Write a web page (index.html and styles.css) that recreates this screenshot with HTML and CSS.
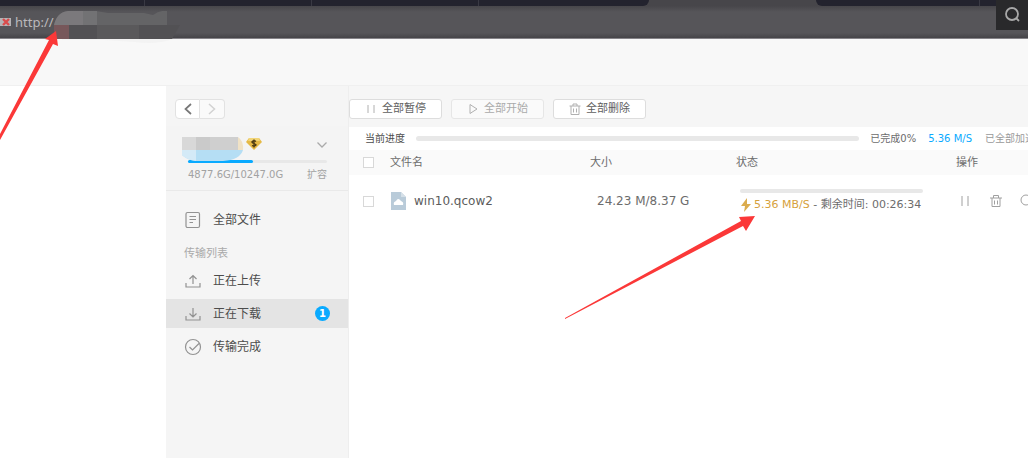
FILE: index.html
```html
<!DOCTYPE html>
<html lang="zh-CN">
<head>
<meta charset="utf-8">
<title>正在下载</title>
<link rel="stylesheet" href="styles.css">
</head>
<body>
<header class="browser">
  <div class="tabs">
    <div class="tab tab-first"></div><div class="tab"></div><div class="tab"></div><div class="tab tab-before"></div>
    <div class="tab-active"></div>
    <div class="tab tab-after"></div><div class="tab tab-last"></div>
  </div>
  <div class="address">
    <svg class="insecure" width="12" height="12" viewBox="0 0 12 12"><path d="M0 2h11v8H0z" fill="#b5b3b5"/><path d="M3 3l6 6M9 3l-6 6" stroke="#d94b4b" stroke-width="2.4"/></svg>
    <span>http://</span>
  </div>
  <svg class="mask" width="128" height="34" viewBox="0 0 128 34">
    <path d="M0 14Q3 1 14 0h28l12 2h36l9 2q7-5 14-4v14z" fill="#646466"/>
    <path d="M0 14Q3 1 14 0h15v14z" fill="#7b797c"/>
    <path d="M29 0h14v14H29z" fill="#727274"/>
    <path d="M0 14h126l-8 14H0z" fill="#525154"/>
    <path d="M0 14h15v14H0z" fill="#77575a"/>
    <path d="M43 14h42v14H43z" fill="#5a595b"/>
    <path d="M8 28h110q-14 6-38 3l-30-2H8z" fill="#f3f3f3"/>
  </svg>
  <button class="search" type="button" aria-label="搜索"><svg width="18" height="18" viewBox="0 0 18 18" fill="none" stroke="#a8a8a8" stroke-width="1.8"><circle cx="9" cy="8" r="6"/><path d="M13 12l3 3"/></svg></button>
</header>
<div class="banner"></div>
<div class="page">
  <div class="blank"></div>
  <aside class="side">
    <div class="history">
      <button type="button" aria-label="后退"><svg width="10" height="14" viewBox="0 0 10 14"><path d="M8 2L2.500 7L8 12" fill="none" stroke="#777" stroke-width="1.7"/></svg></button><button type="button" aria-label="前进" disabled><svg width="10" height="14" viewBox="0 0 10 14"><path d="M2 2l5.500 5L2 12" fill="none" stroke="#d2d2d2" stroke-width="1.5"/></svg></button>
    </div>
    <div class="account">
      <div class="user">
        <svg width="62" height="26" viewBox="0 0 62 26"><path d="M56 0q6 4 5 13h-5z" fill="#f0e2c6"/><path d="M0 0h56v14H0z" fill="#cfcfcf"/><path d="M0 0h14v14H0z" fill="#d8d8d8"/><path d="M14 0h14v14H14z" fill="#cacaca"/><path d="M0 13h61q-3 10-20 11H14Q5 23 0 18z" fill="#b5def4"/><path d="M0 13h14v11Q5 23 0 18z" fill="#d4eaf7"/></svg>
        <svg width="16" height="14" viewBox="0 0 16 14"><path d="M3 1h10l3 4-8 8L0 5z" fill="#e5b945"/><path d="M3 1h10l1 3H2z" fill="#f2d577"/><path d="M10 4.500Q8 3 6.500 4.200T8 6.500T9.500 8.500T6 8.500M8 2.500v8" fill="none" stroke="#493711" stroke-width="1.3"/></svg>
        <button class="more" type="button" aria-label="展开"><svg width="12" height="8" viewBox="0 0 12 8"><path d="M1.500 1.500L6 6l4.500-4.500" fill="none" stroke="#aaa" stroke-width="1.3"/></svg></button>
      </div>
      <div class="quota"><div style="width:47%"></div></div>
      <div class="space"><span>4877.6G/10247.0G</span><a href="#">扩容</a></div>
    </div>
    <nav class="menu">
      <a href="#"><svg width="18" height="18" viewBox="0 0 18 18"><rect x="2" y="1.500" width="13.500" height="15" rx="1.500"/><path d="M5.500 5.500H12M5.500 8.500H12M5.500 11.500H9"/></svg>全部文件</a>
      <h2>传输列表</h2>
      <a href="#"><svg width="18" height="18" viewBox="0 0 18 18"><path d="M2 11v4h14v-4M9 12V4M5.500 7L9 3.500L12.500 7"/></svg>正在上传</a>
      <a href="#" class="current"><svg width="18" height="18" viewBox="0 0 18 18"><path d="M2 11v4h14v-4M9 3v8.500M5.500 8.500L9 12l3.500-3.500"/></svg>正在下载<b>1</b></a>
      <a href="#"><svg width="18" height="18" viewBox="0 0 18 18"><circle cx="9" cy="9" r="7.500"/><path d="M5.500 9l3 3l6.500-6.500"/></svg>传输完成</a>
    </nav>
  </aside>
  <main class="main">
    <div class="toolbar">
      <button type="button"><svg width="12" height="12" viewBox="0 0 12 12"><path d="M3 2v8M9 2v8"/></svg>全部暂停</button>
      <button type="button" disabled><svg width="12" height="12" viewBox="0 0 12 12"><path d="M3 1.500v9L10 6z"/></svg>全部开始</button>
      <button type="button"><svg width="12" height="12" viewBox="0 0 12 12"><path d="M.5 3h11M4 3V1h4v2M2 3v8.500h8V3M4.500 5.500v4M7.500 5.500v4"/></svg>全部删除</button>
    </div>
    <div class="progress">
      <span class="label">当前进度</span>
      <div class="track"></div>
      <span class="done">已完成0%</span>
      <span class="speed">5.36 M/S</span>
      <span class="boost">已全部加速</span>
    </div>
    <table>
      <colgroup><col class="c-check"><col><col class="c-size"><col class="c-status"><col class="c-op"></colgroup>
      <thead><tr><th><input type="checkbox" aria-label="全选"></th><th>文件名</th><th>大小</th><th>状态</th><th>操作</th></tr></thead>
      <tbody><tr>
        <td><input type="checkbox" aria-label="选择 win10.qcow2"></td>
        <td><div class="file"><svg width="16" height="18" viewBox="0 0 16 18"><path d="M1 0h10l5 5v13H1z" fill="#b9cbd9"/><path d="M11 0l5 5h-5z" fill="#d5e0e8"/><path d="M4 13q-1-3 2-4q2-4 5 0q3 1 2 4z" fill="#fff"/></svg>win10.qcow2</div></td>
        <td class="size">24.23 M/8.37 G</td>
        <td class="status"><div class="bar"></div><div class="info"><svg width="12" height="14" viewBox="0 0 12 14"><path d="M7 0L1 8h4l-1 6l7-8H7z" fill="#dbac4e"/></svg><span><em>5.36 MB/S</em> - 剩余时间: 00:26:34</span></div></td>
        <td class="ops"><div>
          <button type="button" aria-label="暂停"><svg width="14" height="14" viewBox="0 0 14 14"><path d="M4 2v10M10 2v10"/></svg></button>
          <button type="button" aria-label="删除"><svg width="14" height="14" viewBox="0 0 14 14"><path d="M1 4h12M4.500 4V1.500h5V4M3 4v8.500h8V4M5.500 6.500v4M8.500 6.500v4"/></svg></button>
          <button type="button" aria-label="查看"><svg width="14" height="14" viewBox="0 0 14 14"><circle cx="6" cy="6" r="5"/><path d="M10 10l3 3"/></svg></button>
        </div></td>
      </tr></tbody>
    </table>
  </main>
</div>
<svg class="arrow arrow-url" width="60" height="112" viewBox="0 0 60 112"><path d="M56 0L45 8l4 1L0 103v6L53 13l5 2z" fill="#fb3838"/></svg>
<svg class="arrow arrow-speed" width="192" height="106" viewBox="0 0 192 106"><path d="M190 1L174 2l2 4L0 103v1L178 11l3 5z" fill="#fb3838"/></svg>
</body>
</html>
```
FILE: styles.css
```css
* { box-sizing: border-box; }
body {
  margin: 0;
  min-height: 100vh;
  display: flex;
  flex-direction: column;
  position: relative;
  overflow: hidden;
  background: #fff;
  color: #6c6c6c;
  font: 11px/16px "DejaVu Sans", "Noto Sans CJK SC", sans-serif;
}
button { border: 0; background: none; padding: 0; font: inherit; color: inherit; display: flex; align-items: center; justify-content: center; }
a { color: inherit; text-decoration: none; }
svg { flex: none; display: block; }

.browser { position: relative; background: #47464a; }
.tabs { display: flex; height: 6px; }
.tab { width: 167px; background: #23232e; border-right: 1px solid #393943; }
.tab-first { width: 145px; }
.tab-before { width: 170px; border-right: 0; border-radius: 0 0 6px 0; }
.tab-active { width: 167px; }
.tab-after { width: 164px; border-radius: 0 0 0 6px; }
.tab-last { flex: 1; border: 0; }
.address {
  display: flex;
  align-items: center;
  gap: 3px;
  height: 33px;
  border-bottom: 1px solid #858388;
  background: linear-gradient(#47464a, #565559 6px, #565559 27px, #454448);
  color: #bab9bc;
  font: 13px/20px "Noto Sans", sans-serif;
}
.mask { position: absolute; left: 54px; top: 11px; }
.search { position: absolute; right: 0; top: 0; width: 32px; height: 30px; background: #29292b; }

.banner { height: 47px; background: #f8f8f8; border-bottom: 1px solid #f0f0f0; }
.page { flex: 1; display: flex; }
.blank { width: 166px; flex: none; }
.side { width: 183px; flex: none; background: #f5f5f5; border-right: 1px solid #eee; }
.history { display: flex; height: 40px; padding: 13px 9px 6px; }
.history button { width: 25px; height: 20px; background: #fff; border: 1px solid #e2e2e2; border-radius: 4px 0 0 4px; }
.history button + button { border-left: 0; border-radius: 0 4px 4px 0; background: #fafafa; }
.account { height: 65px; padding: 11px 20px 0 16px; background: #f4f4f4; border-bottom: 1px solid #e9e9e9; }
.user { display: flex; height: 23px; gap: 2px; }
.more { margin-left: auto; height: 16px; }
.quota { height: 3px; margin: 0 1px 0 6px; border-radius: 2px; background: #e8e8e8; }
.quota div { height: 3px; border-radius: 2px; background: #09aaff; }
.space { display: flex; justify-content: space-between; padding: 4px 1px 0 6px; font-size: 10px; color: #a2a2a2; }
.menu { padding-top: 14px; }
.menu a { display: flex; align-items: center; height: 29px; padding: 0 18px; gap: 11px; font-size: 12px; color: #4c4c4c; margin-bottom: 4px; }
.menu svg { fill: none; stroke: #929292; stroke-width: 1.2; }
.menu h2 { margin: 0; padding: 8px 18px 4px; font-size: 11px; font-weight: 400; color: #aaa; }
.menu .current { background: #e4e4e4; }
.menu b { margin-left: auto; width: 15px; height: 15px; border-radius: 50%; background: #09aaff; color: #fff; font-size: 10px; line-height: 15px; text-align: center; }

.main { flex: 1; min-width: 0; overflow: hidden; }
.toolbar { display: flex; gap: 9px; height: 41px; padding-top: 13px; background: #f6f6f6; }
.toolbar button { width: 93px; height: 20px; gap: 5px; border: 1px solid #ddd; border-radius: 3px; background: #fff; color: #606060; }
.toolbar button:disabled { background: #fafafa; border-color: #e6e6e6; color: #aaa; }
.toolbar svg, .ops svg { fill: none; stroke: #b0b0b0; stroke-width: 1; }
.progress { display: flex; align-items: center; height: 23px; padding-left: 16px; font-size: 10px; white-space: nowrap; }
.label { color: #4c4c4c; }
.track { flex: 1; height: 5px; margin: 0 11px; border-radius: 3px; background: #e8e8e8; }
.speed { margin: 0 13px 0 12px; color: #09aaff; }
.boost { width: 43px; overflow: hidden; color: #999; }

table { width: 100%; table-layout: fixed; border-collapse: collapse; }
.c-check { width: 41px; }
.c-size { width: 146px; }
.c-status { width: 220px; }
.c-op { width: 72px; }
th, td { padding: 0; text-align: left; font-weight: 400; white-space: nowrap; }
th { height: 25px; background: #fafafa; }
td { height: 52px; font-size: 12px; }
input { appearance: none; display: block; width: 11px; height: 11px; margin: 0 0 0 14px; border: 1px solid #d8d8d8; background: #fff; }
.file { display: flex; align-items: center; gap: 8px; color: #5c5c5c; }
.size { padding-left: 7px; }
.status { padding: 0 0 0 4px; font-size: 11px; }
.bar { width: 183px; height: 4px; margin-bottom: 4px; border-radius: 2px; background: #e8e8e8; }
.info { display: flex; align-items: center; gap: 2px; }
.info em { font-style: normal; color: #d6a13c; }
.ops div { display: flex; gap: 17px; padding-left: 2px; }
.ops svg { stroke: #a0a0a0; }

.arrow { position: absolute; pointer-events: none; }
.arrow-url { left: 0; top: 31px; }
.arrow-speed { left: 565px; top: 215px; }
```
